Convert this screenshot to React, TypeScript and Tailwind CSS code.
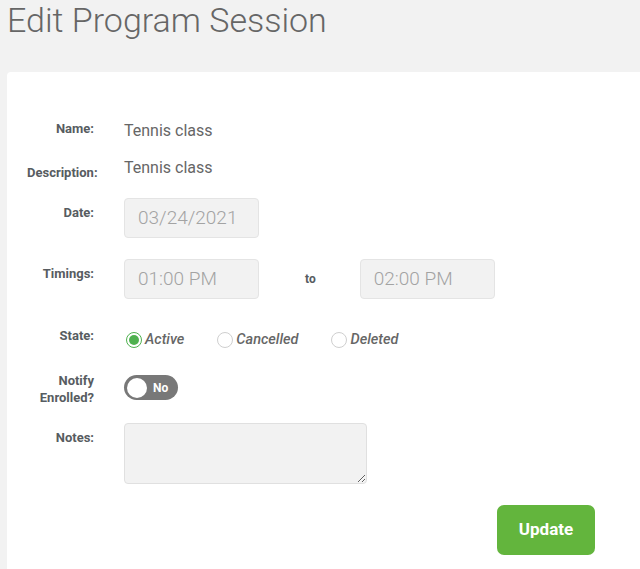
import React from "react";

const labelCls =
  "w-[67px] shrink-0 whitespace-nowrap text-right text-[13px] font-bold leading-[16px] text-[#575c61]";

function Radio({ label, checked }: { label: string; checked?: boolean }) {
  return (
    <label className="flex items-center gap-[3px]">
      <span
        className={
          "flex h-[16px] w-[16px] items-center justify-center rounded-full border bg-white " +
          (checked ? "border-[#4fb14f]" : "border-[#cfcfcf]")
        }
      >
        {checked ? <span className="h-[10px] w-[10px] rounded-full bg-[#4fb14f]" /> : null}
      </span>
      <span className="text-[14.5px] font-medium italic leading-[20px] text-[#666]">{label}</span>
    </label>
  );
}

function Field({ value }: { value: string }) {
  return (
    <div className="flex h-[40px] w-[135px] items-center rounded-[4px] border border-[#e4e4e4] bg-[#f2f2f2] pl-[13px] text-[19px] font-light text-[#a3a3a3]">
      {value}
    </div>
  );
}

export default function App() {
  return (
    <div className="min-h-[569px] bg-[#f2f2f2] font-['Roboto',sans-serif]">
      <h1 className="pl-[7px] text-[34px] font-light leading-[40px] text-[#666]">Edit Program Session</h1>

      <div className="ml-[7px] mt-[32px] rounded-tl-[4px] bg-white pb-[20px] pl-[20px] pt-[47px]">
        <div className="flex items-start">
          <div className={labelCls + " pt-[2px]"}>Name:</div>
          <div className="ml-[30px] text-[16px] leading-[24px] text-[#666]">Tennis class</div>
        </div>

        <div className="mt-[13px] flex items-start">
          <div className={labelCls + " pt-[9px]"}>Description:</div>
          <div className="ml-[30px] text-[16px] leading-[24px] text-[#666]">Tennis class</div>
        </div>

        <div className="mt-[17px] flex items-start">
          <div className={labelCls + " pt-[7px]"}>Date:</div>
          <div className="ml-[30px]">
            <Field value="03/24/2021" />
          </div>
        </div>

        <div className="mt-[21px] flex items-start">
          <div className={labelCls + " pt-[7px]"}>Timings:</div>
          <div className="ml-[30px] flex items-center">
            <Field value="01:00 PM" />
            <span className="ml-[46px] mr-[44px] text-[12px] font-bold text-[#575c61]">to</span>
            <Field value="02:00 PM" />
          </div>
        </div>

        <div className="mt-[28px] flex items-start">
          <div className={labelCls + " pt-[1px]"}>State:</div>
          <div className="ml-[32px] flex h-[25px] items-center gap-[33px]">
            <Radio label="Active" checked />
            <Radio label="Cancelled" />
            <Radio label="Deleted" />
          </div>
        </div>

        <div className="mt-[20px] flex items-start">
          <div className={labelCls + " leading-[17px]"}>
            Notify
            <br />
            Enrolled?
          </div>
          <div className="ml-[30px] mt-[3px] flex h-[25px] w-[54px] items-center rounded-full bg-[#787878] pl-[3px]">
            <span className="h-[20px] w-[20px] rounded-full bg-white" />
            <span className="ml-[6px] text-[12px] font-bold text-white">No</span>
          </div>
        </div>

        <div className="mt-[17px] flex items-start">
          <div className={labelCls + " pt-[7px]"}>Notes:</div>
          <textarea className="ml-[30px] block h-[61px] w-[243px] rounded-[4px] border border-[#e0e0e0] bg-[#f2f2f2] outline-none" />
        </div>

        <div className="mt-[21px] flex justify-end pr-[45px]">
          <button className="h-[50px] w-[98px] rounded-[7px] bg-[#63b53d] text-[17px] font-bold text-white">
            Update
          </button>
        </div>
      </div>
    </div>
  );
}
